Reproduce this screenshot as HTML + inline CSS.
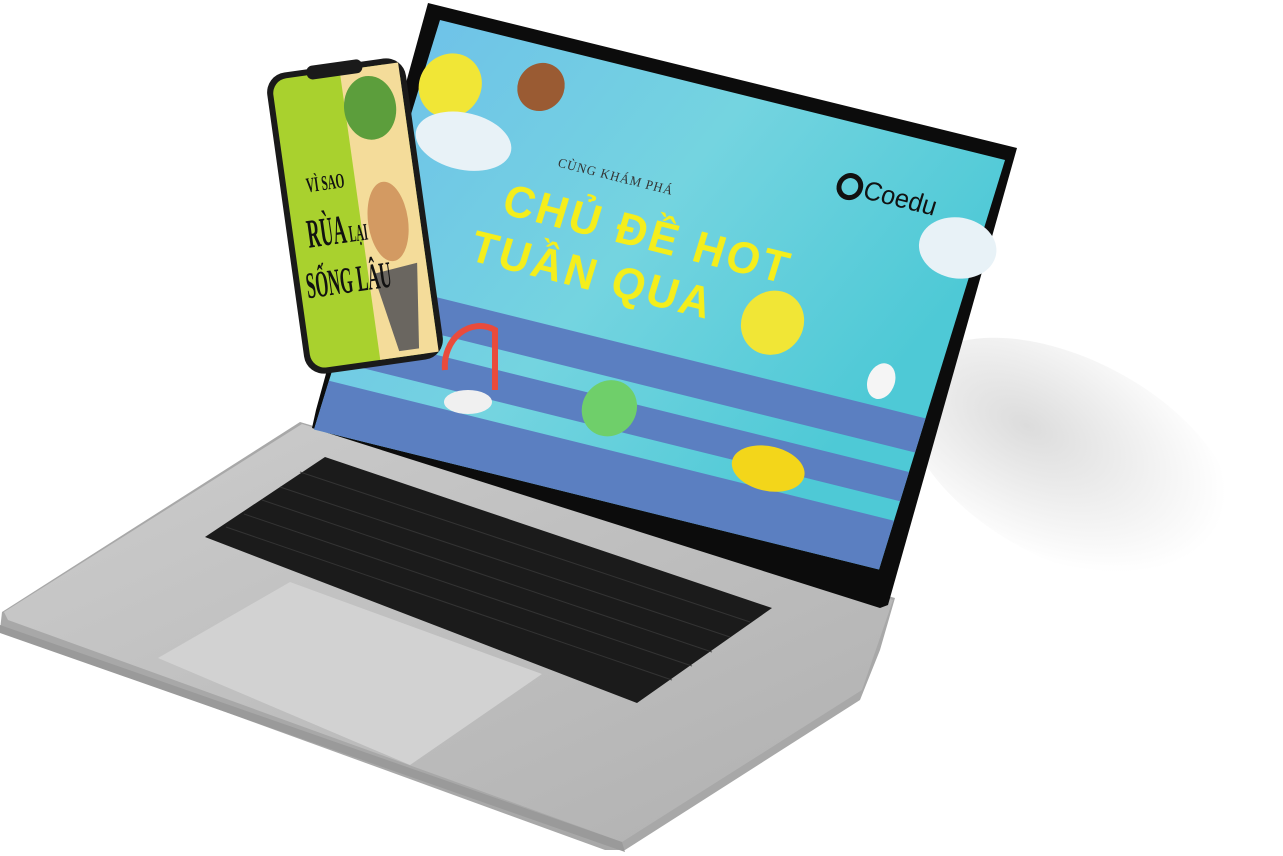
<!DOCTYPE html>
<html><head><meta charset="utf-8"><style>
html,body{margin:0;padding:0;background:#fff;width:1283px;height:856px;overflow:hidden}
svg{display:block}
</style></head><body>
<svg width="1283" height="856" viewBox="0 0 1283 856" xmlns="http://www.w3.org/2000/svg">
<defs>
<radialGradient id="sh" cx="0.35" cy="0.45" r="0.6"><stop offset="0" stop-color="#dcdcdc"/><stop offset="0.6" stop-color="#f1f1f1"/><stop offset="1" stop-color="#fff"/></radialGradient>
<linearGradient id="base" x1="0" y1="0" x2="1" y2="1"><stop offset="0" stop-color="#cdcdcd"/><stop offset="1" stop-color="#b0b0b0"/></linearGradient>
<linearGradient id="scr" x1="0" y1="0" x2="1" y2="0.3"><stop offset="0" stop-color="#6fc3e8"/><stop offset="0.5" stop-color="#74d4e0"/><stop offset="1" stop-color="#4ec9d6"/></linearGradient>
</defs>
<ellipse cx="1070" cy="460" rx="180" ry="100" fill="url(#sh)" transform="rotate(28 1070 460)"/>
<polygon points="2,612 300,422 895,598 880,650 860,700 625,850 605,850 0,630" fill="#a8a8a8"/>
<polygon points="4,612 302,424 893,600 862,690 622,842 8,620" fill="url(#base)"/>
<polygon points="0,625 622,842 625,852 0,633" fill="#9a9a9a"/>
<polygon points="325,457 772,608 637,703 205,537" fill="#1b1b1b"/>
<g stroke="#3a3a3a" stroke-width="1" opacity="0.8">
<path d="M300,472 L750,622 M280,487 L730,637 M262,500 L712,652 M244,514 L692,666 M226,527 L672,680"/>
</g>
<polygon points="158,658 290,582 542,674 410,765" fill="#d2d2d2"/>
<polygon points="428,3 1017,148 888,605 880,608 312,428 316,410" fill="#0c0c0c"/>
<g transform="matrix(0.9417,0.2333,-0.3,0.975,440,20)">
<rect x="0" y="0" width="600" height="420" fill="url(#scr)"/>
<rect x="0" y="265" width="600" height="35" fill="#5b7fc1"/>
<rect x="0" y="320" width="600" height="30" fill="#5b7fc1"/>
<rect x="0" y="370" width="600" height="50" fill="#5b7fc1"/>
<text x="160" y="112" font-family="Liberation Serif,serif" font-size="13" fill="#333" letter-spacing="1">CÙNG KHÁM PHÁ</text>
<text x="118" y="170" font-family="Liberation Sans,sans-serif" font-weight="bold" font-size="44" fill="#f4ee1c" letter-spacing="3">CHỦ ĐỀ HOT</text>
<text x="100" y="222" font-family="Liberation Sans,sans-serif" font-weight="bold" font-size="44" fill="#f4ee1c" letter-spacing="3">TUẦN QUA</text>
<text x="470" y="70" font-family="Liberation Sans,sans-serif" font-size="26" fill="#111">Coedu</text>
<circle cx="455" cy="62" r="11" fill="none" stroke="#111" stroke-width="5"/>
<circle cx="30" cy="60" r="32" fill="#f1e636"/>
<ellipse cx="60" cy="110" rx="50" ry="28" fill="#e8f2f7"/>
<circle cx="120" cy="40" r="24" fill="#9a5b33"/>
<circle cx="420" cy="210" r="32" fill="#f1e636"/>
<ellipse cx="580" cy="95" rx="40" ry="30" fill="#e8f2f7"/>
<circle cx="285" cy="330" r="28" fill="#6fcf6a"/>
<ellipse cx="460" cy="350" rx="38" ry="22" fill="#f3d61a"/>
<ellipse cx="545" cy="240" rx="14" ry="18" fill="#f5f5f5"/>
</g>
<path d="M445,370 A35,40 0 0 1 495,330 L495,390" fill="none" stroke="#e94b3c" stroke-width="6"/>
<ellipse cx="468" cy="402" rx="24" ry="12" fill="#f0f0f0"/>
<g transform="translate(355,216) rotate(-8)">
<rect x="-70" y="-152" width="140" height="304" rx="20" fill="#1a1a1a"/>
<rect x="-64" y="-146" width="128" height="292" rx="15" fill="#a9d12e"/>
<rect x="5" y="-146" width="59" height="292" fill="#f4dc9a"/>
<ellipse cx="30" cy="-105" rx="26" ry="32" fill="#5c9e3c"/>
<ellipse cx="32" cy="10" rx="20" ry="40" fill="#d39a62"/>
<polygon points="10,60 55,55 45,140 25,140" fill="#6a6660"/>
<rect x="-28" y="-155" width="56" height="14" rx="6" fill="#1a1a1a"/>
<g font-family="Liberation Serif,serif" font-weight="bold" fill="#111">
<text transform="translate(-44,-30) scale(0.8,1.5)" font-size="14">VÌ SAO</text>
<text transform="translate(-50,25) scale(0.75,1.7)" font-size="24">RÙA<tspan font-size="14"> LẠI</tspan></text>
<text transform="translate(-58,75) scale(0.75,1.7)" font-size="22">SỐNG LÂU</text>
</g>
</g>
</svg>
</body></html>
